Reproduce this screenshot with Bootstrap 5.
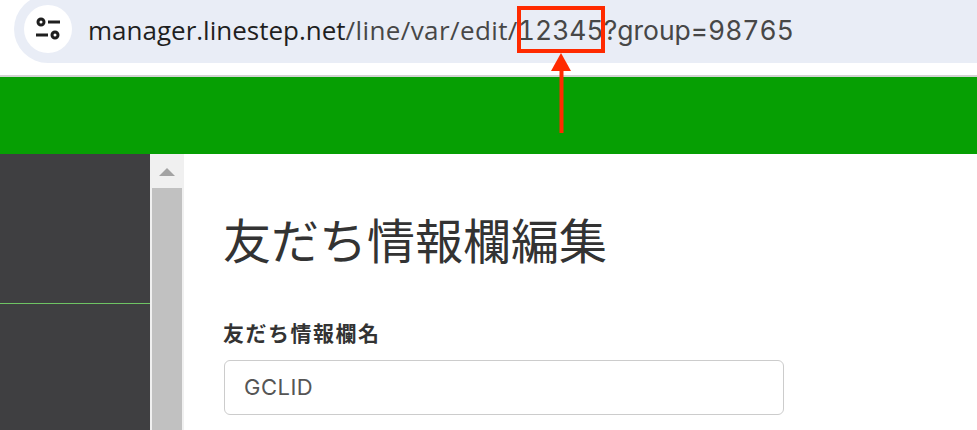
<!DOCTYPE html>
<html lang="ja">
<head>
<meta charset="utf-8">
<title>友だち情報欄編集</title>
<link rel="stylesheet" href="https://cdn.jsdelivr.net/npm/bootstrap@5.3.0/dist/css/bootstrap.min.css">
<style>
html,body{height:100%;overflow:hidden;background:#fff}
.shot{width:977px;height:430px;overflow:hidden;position:relative;font-family:"Noto Sans CJK JP",sans-serif;color:#333}
.chrome-top{height:75px;background:#fff;overflow:hidden}
.urlbar{margin-left:14px;margin-top:-5px;height:68px;background:#e9edf6;border-radius:34px 0 0 34px;padding-left:10px;gap:16px;font-family:"Open Sans","Noto Sans",sans-serif;font-size:26px;color:#474747;white-space:nowrap}
.urltext{padding-top:4px}
.tune{width:48px;height:48px;border-radius:50%;background:#fff;flex:none}
.host{color:#1f1f1f}
.urlpath{letter-spacing:.4px}
.urltail{font-family:Inter,sans-serif;font-size:26.5px;font-variant-numeric:tabular-nums}
.divider{height:2px;background:#d3d3d3}
.greenbar{height:77px;background:#069f03}
.mainrow{height:276px}
.sidemenu{width:150px;background:#3f3f41;flex:none;padding-top:149px}
.sideline{height:1px;background:#6fc464}
.scrolltrack{width:34px;background:#f0f0f0;flex:none;padding-top:14px}
.scrollup{width:0;height:0;border-left:8px solid transparent;border-right:8px solid transparent;border-bottom:8px solid #a3a3a3;margin:0 auto}
.scrollthumb{width:30px;height:242px;margin:12px 0 0 2px;background:#c1c1c1}
.pagebody{padding:56px 0 0 39px;flex:1;background:#fff}
.pagetitle{font-size:48px;font-weight:400;line-height:1.2;margin:0 0 54px;color:#333;font-family:"Noto Sans CJK JP",sans-serif}
.fieldlabel{font-size:21px;letter-spacing:1.5px;font-weight:700;line-height:1;margin-bottom:17px;color:#333}
.fieldinput.form-control{width:560px;height:55px;margin-left:1px;font-size:22px;letter-spacing:.5px;padding:0 19px;color:#555;border:1px solid #ccc;border-radius:6px;font-family:Inter,sans-serif;box-shadow:none}
.idbox{position:absolute;left:517px;top:6px;width:88px;height:47px;border:4px solid #ff2a00}
.arrowline{position:absolute;left:0;top:0}
</style>
</head>
<body>
<div class="shot">
  <div class="chrome-top">
    <div class="urlbar d-flex align-items-center">
      <div class="tune d-flex align-items-center justify-content-center">
        <svg width="48" height="48" viewBox="0 0 48 48" fill="none" stroke="#1f1f1f" stroke-width="3">
          <circle cx="17" cy="17" r="3"/><path d="M24 17h12"/>
          <circle cx="31" cy="30" r="3"/><path d="M12 30h12"/>
        </svg>
      </div>
      <div class="urltext"><span class="host">manager.linestep.net</span><span class="urlpath">/line/var/edit/</span><span class="urltail">12345?group=98765</span></div>
    </div>
  </div>
  <div class="divider"></div>
  <div class="greenbar"></div>
  <div class="mainrow d-flex">
    <div class="sidemenu"><div class="sideline"></div></div>
    <div class="scrolltrack">
      <div class="scrollup"></div>
      <div class="scrollthumb"></div>
    </div>
    <div class="pagebody">
      <h1 class="pagetitle">友だち情報欄編集</h1>
      <div class="fieldlabel">友だち情報欄名</div>
      <input class="form-control fieldinput" type="text" value="GCLID">
    </div>
  </div>
  <div class="idbox"></div>
  <svg class="arrowline" width="977" height="140" viewBox="0 0 977 140">
    <path d="M561.5 133V70" stroke="#ff2a00" stroke-width="4"/>
    <path d="M561 53l10 18h-20z" fill="#ff2a00"/>
  </svg>
</div>
<script src="https://cdn.jsdelivr.net/npm/bootstrap@5.3.0/dist/js/bootstrap.bundle.min.js"></script>
</body>
</html>
